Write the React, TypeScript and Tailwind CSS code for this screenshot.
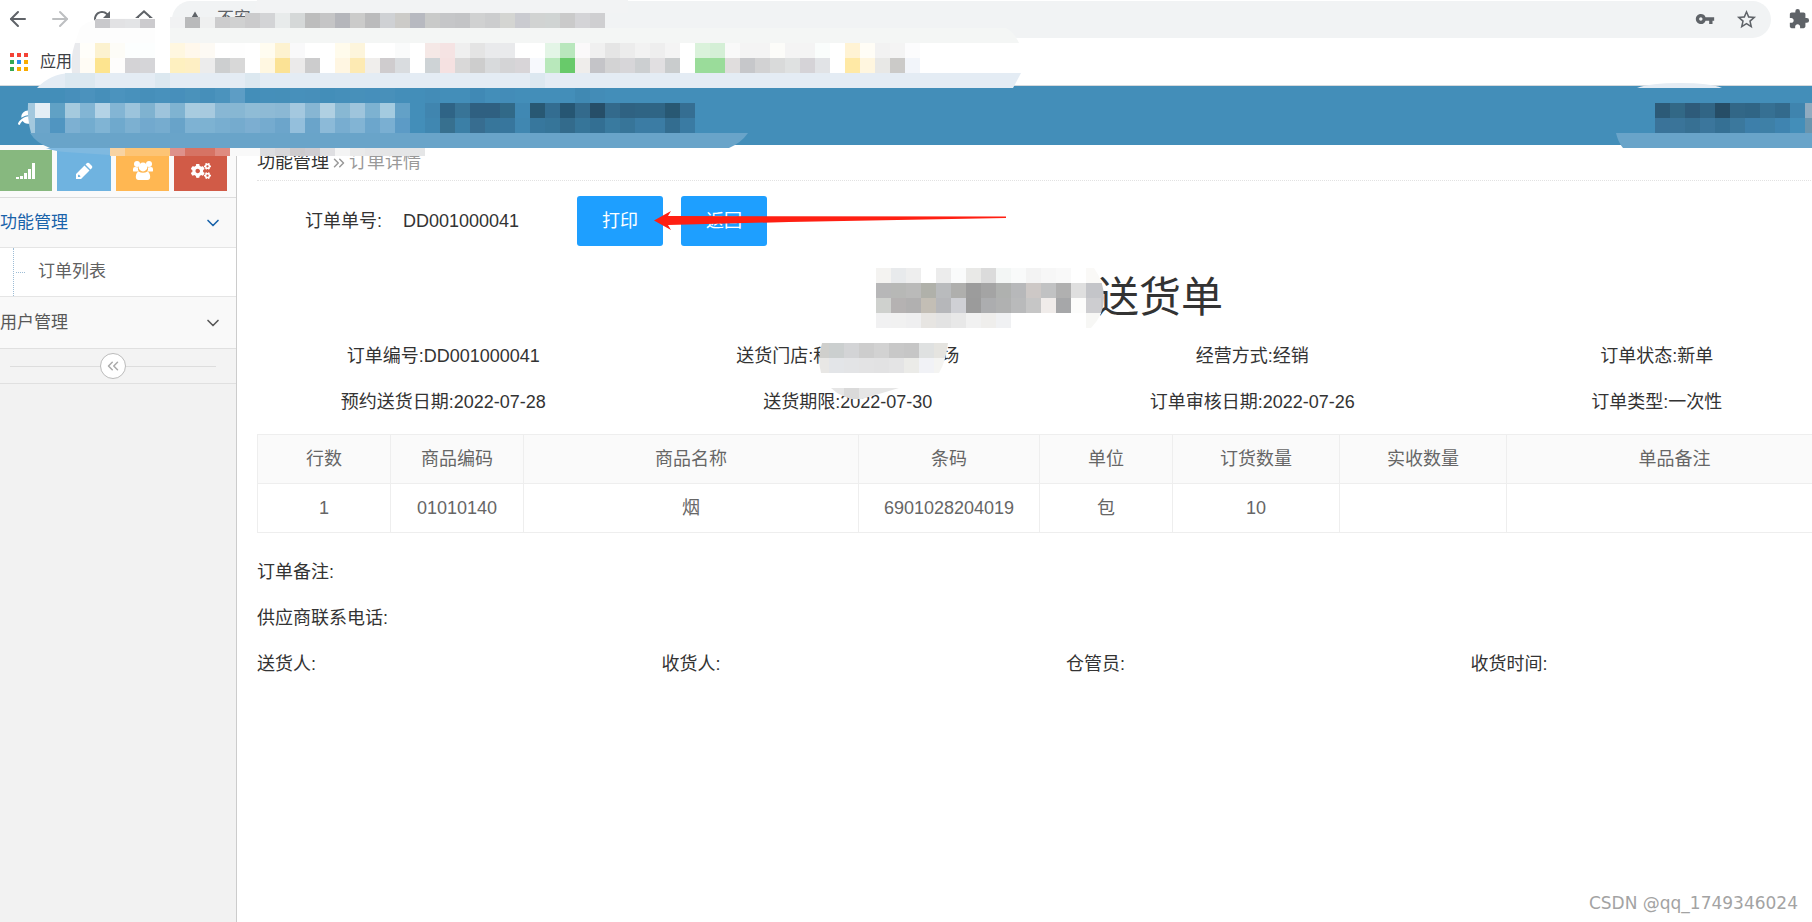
import React, { useState } from 'react';
import { ArrowLeft, ArrowRight, ChevronDown, ChevronsLeft, ChevronsRight } from 'lucide-react';
import { FaCogs, FaLeaf } from 'react-icons/fa';
import { MdExtension, MdOutlineHome, MdRefresh, MdStarBorder, MdVpnKey, MdWarning } from 'react-icons/md';

interface MosaicRow {
  x: number;
  y: number;
  h?: number;
  colors: string;
}

interface OrderLine {
  code: string;
  name: string;
  barcode: string;
  unit: string;
  ordered: string;
  received: string;
  remark: string;
}

const CELL = 15;

const headerRows: MosaicRow[] = [
  { x: 95, y: 19, h: 9, colors: 'c9c9cc e2e2e4 e3e4e6 cccbce' },
  { x: 170, y: 17, h: 11, colors: 'f1f2f3 b9babb eff0f0 cccccd d0d1d1' },
  { x: 245, y: 13, colors: 'cbcbcc d3d4d6 e8ebeb d5d8d8 bdbdbd c5c5c6 b5b6bb cbcbca bbbbbc cfd1d4 cccbc8 b7b9c0 c9cac9 c5c6c8 c3c4c6 d0d1d1 cccdce d4d5d2 cacbd0 d1d3d2 d0d4d3 cacaca d4d4d7 cfcfd1' },
  { x: 80, y: 43, colors: 'fffefa fcf2d0 fdfcf7 fcfefe fcfefe ffffff fff7e0 fff8ec fdfaf4 ffffff fefefe ffffff fffcf0 fdf2d0 f9f9fa ffffff ffffff fffbec fdf5dc ffffff ffffff fafbfb ffffff f5e8e6 f5e3e3 efefef e4e4e4 e9eaec e9eaec ffffff ffffff e3f5e6 b9e7bd fbf9fa f0f0f0 e5e5e5 ececec f2f2f2 eeeeee f4f4f4 ffffff daf2db d4efd6 f9f9f9 f4f4f4 f4f4f4 fcfcf9 f4f4f4 f4f4f4 fafdfc ffffff fff3d4 fffdf6 f2f2f2 f4f4f4 fcfcfd' },
  { x: 80, y: 58, colors: 'fffcf5 fde48f fefdfc d4d3d6 d5d5d8 ffffff fef0c0 feefc4 ececec cdcfd0 d8d8d8 ffffff fff7e1 fbe295 ebeaea cccccd ffffff fff6e2 fdeab3 f0eeec cfccce d9dcdf ffffff ced3d6 f5e1e1 d9d8d8 cdcdcd d8dadc d4d4d6 d8d5d8 f7f9fd b8e8bb 68ca6a efedeb c4c4c8 d3d3d4 d7d6d9 cccfd1 e1dfe1 c9cccd ffffff 9adc9a 9adc9a e0dddd c6c7ca d2d2d3 d9dada dfe1e1 d5d3d7 e1e3e6 ffffff ffe9a5 fff6df e8e8e6 cbcac8 f2f5fa' },
  { x: 65, y: 88, colors: '478fbb 4b92bd 468fba 4b93be 4891bc 468fba 4891bc 478fbb 4a92bb 468fba 4b93bd 5d9dc5 438eb9 458fba 458fb9 4790bb 478fba 438eb9 458fba 4790ba 468fbb 4890ba 448eb9 438eb9 438cb7 438eb9 438eb9 4089b5 438eb9 438cb8 438eb9 438eb9 438eb9 438eb9 4089b3 438cb7 438eb9' },
  { x: 35, y: 103, colors: 'e4eef5 60a1c5 a5cade 82b5d4 b4d3e6 83b5d4 9cc4dc 7fb2d0 9ec4dc 7fb3d1 a8cce0 a7cadf 88b7d4 87b7d3 8fbcd6 8ebad5 8bb8d4 a4c8df 87b6d3 b0d0e2 88b8d3 9fc5dc 7db2d1 a4cbe0 63a1c7 438eb9 4085af 2f6486 387497 2f6081 2f6081 316988 4088b3 285873 336d91 265673 336a8c 264e68 336a8c 2f6282 2f6484 2f6585 285873 356e92' },
  { x: 35, y: 118, colors: '6ba5ca 5095c1 7db0d2 73accf 80b4d4 6fa9cd 7cb0d1 72a9ce 76accf 68a3c9 7eb2d3 7db2d2 78aed0 75abce 7caed1 75abcf 6ca5cb 94bfdc 6aa4ca 8cbad8 78add0 82b4d4 6ca6cc 7aafd2 5c9bc6 438eb9 4087b1 37708f 3b7fa6 376d90 37769b 37769d 4087b1 37779d 367599 336b8c 367599 336f93 397a9f 377599 3b7ca4 3b7ca4 336d90 3a7ba3' },
  { x: 110, y: 148, h: 8, colors: 'f8d3a2 fdc474 fdc474 fdc474 de918b d67364 d67364 df8b80 f9f9f9 f9f9f9 dddde0 d8d7da cecbcd d0ced2 dfdfe2 f4f4f4 eaeaea e7e7e8 e5e6e7 e5e6e7 e5e6e7' },
];

const userRows: MosaicRow[] = [
  { x: 55, y: 20, colors: '2c5a77 326886 2e5b7a 316585 264d66 326787 306585 367093 336a8c 3f84ae 8fabc0' },
  { x: 55, y: 35, colors: '3a7399 3a7499 377093 3b769c 357094 3b789d 3d7faa 3e80a7 3f84b0 438eb9 6a95ae' },
];

const titleRows: MosaicRow[] = [
  { x: 0, y: 0, colors: 'f4f3f1 e8eaec eeeeee ffffff ececec fafbfb e9e9e7 dbdbdb f3f6f5 f9fafa f3f3f3 f7f7f7 f9f9f9 ffffff faf9f7 faf9f7' },
  { x: 0, y: 15, colors: 'b7b7b8 b7b8b6 babab9 b0b1aa b9bbbd afafad 9c9c9c a4a4a4 afb1af b7b8ba cdc8c6 c1c2c3 b0b0b0 dfdfdf c4c5c9 c4c5c9' },
  { x: 0, y: 30, colors: 'cfd1ce b5b2b2 b1b0b0 c3beb5 b6b7ba cfd0d5 9b9b9b acadaf b0b1b1 b9babb c6c6c6 f0ecea a6a7a9 fcfcfb cdcdd0 c4c5c9' },
  { x: 0, y: 45, colors: 'f1f1f2 f1f1f1 efeff0 e7e5e2 e3e3e3 e8e8e8 f1f1f1 efeeec f0f1f3 ffffff ffffff ffffff ffffff ffffff f7f7f5 f7f7f5' },
];

const storeRows: MosaicRow[] = [
  { x: -5, y: 0, colors: 'cfcfcc cbcfcf d3d4d6 cdcdcd d2d2d2 c8c8c8 c6c6c6 dfe1e1 e5e4e0' },
  { x: -5, y: 15, colors: 'e8e7e5 e3e5e8 e3e4e6 e3e3e4 e2e2e3 e4e4e5 ebebe8 f1f2f6 f4f4f2' },
];

const orderLines: OrderLine[] = [
  { code: '01010140', name: '烟', barcode: '6901028204019', unit: '包', ordered: '10', received: '', remark: '' },
];

const columns = ['行数', '商品编码', '商品名称', '条码', '单位', '订货数量', '实收数量', '单品备注'];

function SignalIcon() {
  return (
    <svg width="20" height="18" fill="currentColor" shapeRendering="crispEdges" aria-hidden="true">
      <path d="M0 15h3v2H0zM4 14h3v3H4zM8 11h3v6H8zM12 7h3v10h-3zM16 1h3v16h-3z" />
    </svg>
  );
}

function PencilIcon() {
  return (
    <svg width="18" height="18" fill="currentColor" aria-hidden="true">
      <path d="M1 17V12L9.500 3.500L14.500 8.500L6 17ZM3 13.300V15H4.700L5.600 14.200L3.800 12.400ZM10.500 2.500L12 1Q13 .4 14 1L17 4Q17.600 5 17 6L15.500 7.500Z" />
    </svg>
  );
}

function UsersIcon() {
  return (
    <svg width="20" height="19" fill="currentColor" aria-hidden="true">
      <circle cx="4" cy="3" r="3" />
      <circle cx="16" cy="3" r="3" />
      <path d="M0 10V8Q0 6 2 6L5 6.500Q4.500 8.500 6 10.500H1.500Q0 10.500 0 10ZM20 10V8Q20 6 18 6L15 6.500Q15.500 8.500 14 10.500H18.500Q20 10.500 20 10Z" />
      <circle cx="10" cy="6" r="4.400" />
      <path d="M5.500 10.600Q10 13 14.500 10.600Q17 12 17.200 16Q17 19 14.500 19H5.500Q3 19 2.800 16Q3 12 5.500 10.600Z" />
    </svg>
  );
}

const shortcuts = [
  { label: '统计', icon: <SignalIcon />, className: 'w-[52px] bg-[#87b87f]' },
  { label: '编辑', icon: <PencilIcon />, className: 'w-[54px] bg-[#6fb3e0]' },
  { label: '用户', icon: <UsersIcon />, className: 'w-[53px] bg-[#ffb752]' },
  { label: '设置', icon: <FaCogs size={20} />, className: 'w-[53px] bg-[#d15b47]' },
];

function Cells({ rows }: { rows: MosaicRow[] }) {
  return (
    <g shapeRendering="crispEdges">
      {rows.map((row) =>
        row.colors.split(' ').map((color, i) => (
          <rect
            key={`${row.y}-${row.x}-${i}`}
            x={row.x + i * CELL}
            y={row.y}
            width={CELL}
            height={row.h ?? CELL}
            fill={`#${color}`}
          />
        ))
      )}
    </g>
  );
}

// censored tabs, bookmarks and site name
function HeaderMosaic() {
  return (
    <svg className="pointer-events-none absolute top-0 left-0" width="1030" height="160" aria-hidden="true">
      <path d="M80 28Q88 20 105 18H155V43H75Z" fill="#fdfdfd" />
      <path d="M253 18L257 0H628V13H253Z" fill="#f2f3f4" />
      <path d="M170 28H1006Q1014 32 1019 43H170Z" fill="#f4f6f5" />
      <path d="M75 43H80V73H72Q70 58 75 43Z" fill="#e9eaed" />
      <path d="M37 88Q50 74 70 73H1021L1013 88Z" fill="#e4ecf4" />
      <path d="M65 73h30v15H65zM155 73h15v15H155zM245 73h15v15H245zM530 73h15v15H530z" fill="#dce8f0" />
      <path d="M28 103H35V133H31Q27 118 28 103Z" fill="#a3c8de" />
      <path d="M30 133H748Q741 143 729 148H50Q36 143 30 133Z" fill="#69a4c9" />
      <path d="M46 148H110V155L65 152Q54 151 46 148Z" fill="#7fb9e0" />
      <Cells rows={headerRows} />
    </svg>
  );
}

function UserMosaic() {
  return (
    <svg className="pointer-events-none absolute top-[83px] right-0" width="212" height="66" aria-hidden="true">
      <path d="M37 5Q50 0 80 0Q110 0 122 5Z" fill="#e4ecf4" />
      <path d="M16 50H212V65H23Q18 59 16 50Z" fill="#69a4c9" />
      <Cells rows={userRows} />
    </svg>
  );
}

function TitleMosaic() {
  return (
    <svg className="pointer-events-none absolute top-0 -left-px" width="228" height="60" aria-hidden="true">
      <clipPath id="title-clip">
        <path d="M0 0H218Q228 14 228 30Q228 47 215 60H0Z" />
      </clipPath>
      <g clipPath="url(#title-clip)">
        <Cells rows={titleRows} />
      </g>
    </svg>
  );
}

function StoreMosaic() {
  return (
    <svg className="pointer-events-none absolute top-[10px] -left-3" width="130" height="58" aria-hidden="true">
      <clipPath id="store-clip">
        <path d="M3 0H129Q127 18 120 30H2Q-2 15 3 0Z" />
      </clipPath>
      <g clipPath="url(#store-clip)">
        <Cells rows={storeRows} />
      </g>
      <path d="M12 45H80L43 56Q24 57 12 45Z" fill="#e6e6e6" />
      <path d="M25 45h15v11h-8l-7-3z" fill="#dadada" />
    </svg>
  );
}

function BrowserBar() {
  const dots = ['#f44336', '#f44336', '#f44336', '#34a853', '#2b8cf0', '#f9ab00', '#34a853', '#f9ab00', '#f9ab00'];
  return (
    <div className="border-b border-[#d5dade] bg-white">
      <div className="flex h-[38px] items-center text-[#5f6368]">
        <div className="flex w-[172px] shrink-0 items-center gap-[18px] pl-[6px]">
          <button aria-label="后退"><ArrowLeft size={24} /></button>
          <button aria-label="前进" className="text-[#bdbfc1]"><ArrowRight size={24} /></button>
          <button aria-label="刷新"><MdRefresh size={24} /></button>
          <button aria-label="主页"><MdOutlineHome size={24} /></button>
        </div>
        <div className="flex h-[37px] flex-1 items-center rounded-full bg-[#f1f3f4] pr-[13px] pl-[14px]">
          <MdWarning size={18} />
          <span className="ml-[13px] text-[17px]">不安</span>
          <button className="ml-auto" aria-label="密码"><MdVpnKey size={20} /></button>
          <button className="ml-5" aria-label="收藏"><MdStarBorder size={23} /></button>
        </div>
        <button className="mr-[2px] ml-[17px]" aria-label="扩展程序"><MdExtension size={22} /></button>
      </div>
      <div className="flex h-[47px] items-center pl-[10px]">
        <a href="#apps" className="flex items-center gap-3 text-[16px] text-[#3c4043]">
          <svg width="18" height="18" aria-hidden="true">
            {dots.map((color, i) => (
              <rect key={i} x={(i % 3) * 7} y={Math.floor(i / 3) * 7} width="4" height="4" fill={color} />
            ))}
          </svg>
          应用
        </a>
      </div>
    </div>
  );
}

function Sidebar() {
  const [open, setOpen] = useState(true);
  return (
    <aside className="w-[237px] shrink-0 border-r border-[#ccc] bg-[#f2f2f2] text-[17px] text-[#585858]">
      <div className="flex h-[53px] gap-[5px] border-b border-[#ddd] bg-[#fafafa] pt-[5px]">
        {shortcuts.map(({ label, icon, className }) => (
          <button key={label} aria-label={label} className={`flex h-[41px] items-center justify-center text-white ${className}`}>
            {icon}
          </button>
        ))}
      </div>
      <nav>
        <button
          onClick={() => setOpen(!open)}
          className="flex h-[50px] w-full items-center justify-between border-b border-[#e5e5e5] bg-[#f9f9f9] pr-[13px] text-[#1963aa]"
        >
          功能管理
          <ChevronDown size={20} />
        </button>
        {open && (
          <div className="flex h-[49px] items-center border-b border-[#e5e5e5] bg-white pl-[13px]">
            <span className="h-full border-l border-dotted border-[#9dbdd6]" />
            <span className="ml-[2px] w-[9px] border-t border-dotted border-[#9dbdd6]" />
            <a href="#orders" className="ml-[13px] text-[#616161]">订单列表</a>
          </div>
        )}
        <button className="flex h-[52px] w-full items-center justify-between border-b border-[#e0e0e0] bg-[#f9f9f9] pr-[13px]">
          用户管理
          <ChevronDown size={20} />
        </button>
      </nav>
      <div className="flex h-[35px] items-center border-b border-[#e0e0e0] bg-[#f3f3f3] pr-5 pl-[10px]">
        <span className="h-px flex-1 bg-[#ddd]" />
        <button aria-label="收起菜单" className="flex size-[26px] items-center justify-center rounded-full border border-[#bbb] bg-white text-[#aaa]">
          <ChevronsLeft size={18} />
        </button>
        <span className="h-px flex-1 bg-[#ddd]" />
      </div>
    </aside>
  );
}

function OrderDetail() {
  return (
    <main className="min-w-0 flex-1 overflow-hidden bg-white text-[18px] text-[#333]">
      <div className="-mr-[47px] pr-4 pl-5">
        <div className="flex h-[36px] items-center border-b border-dotted border-[#e2e2e2]">
          <a href="#function">功能管理</a>
          <ChevronsRight size={18} className="mx-px text-[#999]" />
          <span className="text-[#999]">订单详情</span>
        </div>

        <div className="mt-[15px] flex h-[50px] items-center pl-12">
          <span className="w-[98px]">订单单号:</span>
          <span className="w-[174px]">DD001000041</span>
          <div className="relative flex gap-[18px] text-white">
            <button className="h-[50px] w-[86px] rounded-[3px] bg-[#1e9fff]">打印</button>
            <button className="h-[50px] w-[86px] rounded-[3px] bg-[#1e9fff]">返回</button>
            <svg className="pointer-events-none absolute top-[14px] left-[77px]" width="354" height="20" aria-hidden="true">
              <path d="M0 10.500L17 1L14 6L352 6.500V8L135 12L14 15L17 20Z" fill="#ff1f12" />
            </svg>
          </div>
        </div>

        <div className="mt-[22px] flex justify-center">
          <h1 className="relative h-[60px] pl-[220px] text-[42px] leading-[60px]">
            送货单
            <TitleMosaic />
          </h1>
        </div>

        <div className="-mx-4 mt-[5px] grid grid-cols-4 text-center leading-[46px]">
          <div>订单编号:DD001000041</div>
          <div className="z-10">
            送货门店:科
            <span className="relative inline-block h-[46px] w-[110px] align-top">
              <StoreMosaic />
            </span>
            场
          </div>
          <div>经营方式:经销</div>
          <div>订单状态:新单</div>
          <div>预约送货日期:2022-07-28</div>
          <div>送货期限:2022-07-30</div>
          <div>订单审核日期:2022-07-26</div>
          <div>订单类型:一次性</div>
        </div>

        <table className="mt-[9px] w-full table-fixed border-collapse text-center text-[#666]">
          <colgroup>
            <col className="w-[133px]" />
            <col className="w-[133px]" />
            <col className="w-[335px]" />
            <col className="w-[181px]" />
            <col className="w-[133px]" />
            <col className="w-[167px]" />
            <col className="w-[167px]" />
            <col />
          </colgroup>
          <thead>
            <tr className="h-[49px] bg-[#fafafa]">
              {columns.map((column) => (
                <th key={column} className="border border-[#eee] font-normal">{column}</th>
              ))}
            </tr>
          </thead>
          <tbody>
            {orderLines.map((line, i) => (
              <tr key={line.code} className="h-[49px]">
                <td className="border border-[#eee]">{i + 1}</td>
                <td className="border border-[#eee]">{line.code}</td>
                <td className="border border-[#eee]">{line.name}</td>
                <td className="border border-[#eee]">{line.barcode}</td>
                <td className="border border-[#eee]">{line.unit}</td>
                <td className="border border-[#eee]">{line.ordered}</td>
                <td className="border border-[#eee]">{line.received}</td>
                <td className="border border-[#eee]">{line.remark}</td>
              </tr>
            ))}
          </tbody>
        </table>

        <div className="mt-4 leading-[46px]">
          <p>订单备注:</p>
          <p>供应商联系电话:</p>
          <div className="-mx-4 grid grid-cols-4">
            <span className="px-4">送货人:</span>
            <span className="px-4">收货人:</span>
            <span className="px-4">仓管员:</span>
            <span className="px-4">收货时间:</span>
          </div>
        </div>
      </div>
    </main>
  );
}

export default function App() {
  return (
    <div className="relative flex min-h-screen flex-col overflow-hidden bg-white font-['Liberation_Sans','Noto_Sans_CJK_SC',sans-serif]">
      <BrowserBar />
      <header className="flex h-[59px] items-center bg-[#438eb9] pl-[18px] text-white">
        <FaLeaf size={20} />
      </header>
      <div className="flex flex-1">
        <Sidebar />
        <OrderDetail />
      </div>
      <HeaderMosaic />
      <UserMosaic />
      <div className="absolute right-[14px] bottom-[6px] font-['DejaVu_Sans',sans-serif] text-[17px] text-[#a3a3a3]">
        CSDN @qq_1749346024
      </div>
    </div>
  );
}
